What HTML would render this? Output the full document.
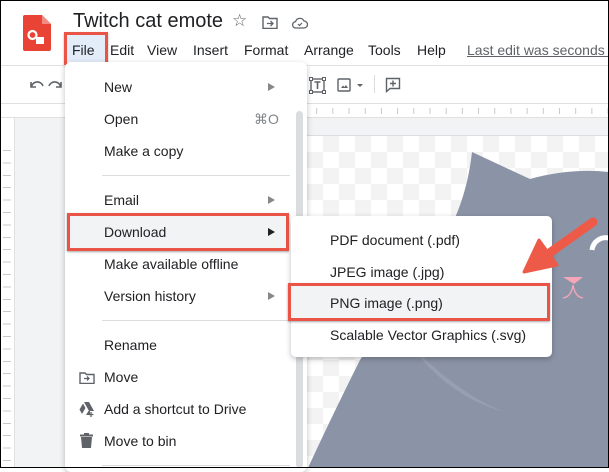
<!DOCTYPE html>
<html><head><style>
*{margin:0;padding:0;box-sizing:border-box}
body{width:609px;height:468px;overflow:hidden;background:#fff;font-family:"Liberation Sans",Arial,sans-serif;color:#202124;position:relative}
.abs{position:absolute}
.mi{position:absolute;left:104px;font-size:14px;color:#202124;line-height:16px}
.arr{position:absolute;left:268px;width:0;height:0;border-top:4px solid transparent;border-bottom:4px solid transparent;border-left:7px solid #888}
.sep{position:absolute;left:102px;width:188px;height:1px;background:#dadce0}
.si{position:absolute;left:330px;font-size:14px;line-height:16px;color:#202124}
</style></head><body>
<svg class="abs" style="left:23px;top:15px" width="28" height="36" viewBox="0 0 28 36">
<path d="M2 0h17l9 9v25a2 2 0 0 1-2 2H2a2 2 0 0 1-2-2V2a2 2 0 0 1 2-2z" fill="#e94335"/>
<path d="M19 0v9h9z" fill="#f28b82"/>
<circle cx="9.5" cy="20" r="4" fill="none" stroke="#fff" stroke-width="2.2"/>
<path d="M13 22h8v7h-8z" fill="#fff"/>
</svg>
<div class="abs" style="left:73px;top:10px;font-size:20px;color:#202124">Twitch cat emote</div>
<div class="abs" style="left:232px;top:11px;font-size:17px;color:#5f6368">☆</div>
<svg class="abs" style="left:262px;top:16px" width="16" height="13" viewBox="0 0 16 13"><path d="M1 1h5l1.5 1.5H15v10H1z" fill="none" stroke="#5f6368" stroke-width="1.4"/><path d="M5 7.5h6M8.5 5l2.5 2.5L8.5 10" fill="none" stroke="#5f6368" stroke-width="1.3"/></svg>
<svg class="abs" style="left:292px;top:17px" width="16" height="12" viewBox="0 0 16 12"><path d="M4 11a3.2 3.2 0 0 1-.4-6.4A4.5 4.5 0 0 1 12 4a3.5 3.5 0 0 1 0 7z" fill="none" stroke="#5f6368" stroke-width="1.3"/><path d="M6 7l1.5 1.5L10 6" fill="none" stroke="#5f6368" stroke-width="1.2"/></svg>
<div class="abs" style="left:64px;top:32px;width:44px;height:34px;border:3px solid #ea5447;background:#e3ecf9;box-shadow:0 1px 2px rgba(0,0,0,.3)"></div>
<div class="abs" style="top:42px;left:72px;font-size:14px;color:#202124">File</div>
<div class="abs" style="top:42px;left:110px;font-size:14px">Edit</div>
<div class="abs" style="top:42px;left:147px;font-size:14px">View</div>
<div class="abs" style="top:42px;left:193px;font-size:14px">Insert</div>
<div class="abs" style="top:42px;left:244px;font-size:14px">Format</div>
<div class="abs" style="top:42px;left:304px;font-size:14px">Arrange</div>
<div class="abs" style="top:42px;left:368px;font-size:14px">Tools</div>
<div class="abs" style="top:42px;left:417px;font-size:14px">Help</div>
<div class="abs" style="top:42px;left:467px;font-size:14px;color:#5f6368;text-decoration:underline;white-space:nowrap">Last edit was seconds ago</div>
<div class="abs" style="left:0;top:65px;width:609px;height:1px;background:#e0e0e0"></div>
<svg class="abs" style="left:28px;top:79px" width="36" height="12" viewBox="0 0 36 12"><path d="M3 3v5h5M3.5 7.5A6 6 0 0 1 15 7" fill="none" stroke="#5f6368" stroke-width="1.6"/><path d="M33 3v5h-5M32.5 7.5A6 6 0 0 0 21 7" fill="none" stroke="#5f6368" stroke-width="1.6"/></svg>
<svg class="abs" style="left:309px;top:77px" width="17" height="17" viewBox="0 0 17 17"><rect x="2" y="2" width="13" height="13" fill="none" stroke="#5f6368" stroke-width="1.4"/><rect x="0.5" y="0.5" width="3" height="3" fill="#fff" stroke="#5f6368"/><rect x="13.5" y="0.5" width="3" height="3" fill="#fff" stroke="#5f6368"/><rect x="0.5" y="13.5" width="3" height="3" fill="#fff" stroke="#5f6368"/><rect x="13.5" y="13.5" width="3" height="3" fill="#fff" stroke="#5f6368"/><path d="M5.5 5h6M8.5 5v7" stroke="#5f6368" stroke-width="1.6"/></svg>
<svg class="abs" style="left:337px;top:78px" width="30" height="14" viewBox="0 0 30 14"><rect x="1" y="1" width="12" height="12" rx="1" fill="none" stroke="#5f6368" stroke-width="1.4"/><path d="M4 10l2-2.5 1.5 1.5 1.5-2 2 3z" fill="#5f6368"/><path d="M20 6h6l-3 3z" fill="#5f6368"/></svg>
<div class="abs" style="left:374px;top:75px;width:1px;height:18px;background:#dadce0"></div>
<svg class="abs" style="left:385px;top:77px" width="16" height="16" viewBox="0 0 16 16"><path d="M1.5 1.5h13v10H5l-3.5 3z" fill="none" stroke="#5f6368" stroke-width="1.4"/><path d="M8 3.5v6M5 6.5h6" stroke="#5f6368" stroke-width="1.4"/></svg>
<div class="abs" style="left:0;top:103px;width:609px;height:1px;background:#e0e0e0"></div>
<div class="abs" style="left:300px;top:108px;width:309px;height:6px;background-image:linear-gradient(90deg,#c8c8c8 0 1px,transparent 1px);background-size:16.2px 6px;background-repeat:repeat-x"></div>
<div class="abs" style="left:0;top:117px;width:609px;height:1px;background:#e0e0e0"></div>
<div class="abs" style="left:0;top:118px;width:609px;height:18px;background:#f1f3f4"></div>
<div class="abs" style="left:0;top:135px;width:609px;height:1px;background:#dadce0"></div>
<div class="abs" style="left:0;top:118px;width:14px;height:350px;background:#fff"></div>
<div class="abs" style="left:14px;top:118px;width:1px;height:350px;background:#e0e0e0"></div>
<div class="abs" style="left:15px;top:118px;width:50px;height:350px;background:#f1f3f4"></div>
<div class="abs" style="left:3px;top:150px;width:8px;height:318px;background:repeating-linear-gradient(180deg,#c8c8c8 0 1px,transparent 1px 12.4px)"></div>
<div class="abs" style="left:307px;top:136px;width:302px;height:332px;background-color:#fff;background-image:linear-gradient(45deg,#f3f3f3 25%,transparent 25%,transparent 75%,#f3f3f3 75%),linear-gradient(45deg,#f3f3f3 25%,transparent 25%,transparent 75%,#f3f3f3 75%);background-size:32px 32px;background-position:0 0,16px 16px"></div>
<svg class="abs" style="left:0;top:0" width="609" height="468" viewBox="0 0 609 468">
<path d="M472 152 L530 179 Q570 168 609 172 L609 468 L308 468 Q330 420 360 360 Q400 300 430 260 Q465 215 472 152z" fill="#8b94a6"/>
<path d="M410 345 Q460 395 505 412 Q450 398 410 345z" fill="#979fb0"/>
<path d="M592 250a14 14 0 0 1 17-12" fill="none" stroke="#fff" stroke-width="5"/>
<path d="M563 277h20l-9 7z" fill="#f6a6b8"/>
<path d="M563 298q8-1 10-13q2 12 10 13" fill="none" stroke="#f6a6b8" stroke-width="1.3"/>
</svg>
<div class="abs" style="left:65px;top:62px;width:242px;height:410px;background:#fff;border-radius:6px;box-shadow:0 2px 6px rgba(0,0,0,.25)"></div>
<div class="abs" style="left:296px;top:111px;width:7px;height:357px;background:#dadce0;border-radius:4px"></div>
<div class="mi" style="top:79px">New</div><div class="arr" style="top:83px"></div>
<div class="mi" style="top:111px">Open</div><div class="abs" style="left:254px;top:111px;font-size:14px;color:#80868b">⌘O</div>
<div class="mi" style="top:143px">Make a copy</div>
<div class="sep" style="top:175px"></div>
<div class="mi" style="top:192px">Email</div><div class="arr" style="top:196px"></div>
<div class="abs" style="left:67px;top:213px;width:222px;height:38px;border:3px solid #ea5447;background:#f1f3f4;box-shadow:0 1px 2px rgba(0,0,0,.35)"></div>
<div class="mi" style="top:224px">Download</div><div class="arr" style="top:228px;border-left-color:#202124"></div>
<div class="mi" style="top:256px">Make available offline</div>
<div class="mi" style="top:288px">Version history</div><div class="arr" style="top:292px"></div>
<div class="sep" style="top:320px"></div>
<div class="mi" style="top:337px">Rename</div>
<svg class="abs" style="left:79px;top:372px" width="16" height="12" viewBox="0 0 16 12"><path d="M1 1h5l1.5 1.5H15v9H1z" fill="none" stroke="#5f6368" stroke-width="1.4"/><path d="M5 6.5h5M8 4.5l2 2-2 2" fill="none" stroke="#5f6368" stroke-width="1.3"/></svg>
<div class="mi" style="top:369px">Move</div>
<svg class="abs" style="left:79px;top:402px" width="16" height="15" viewBox="0 0 16 15"><path d="M5 0h5l5 9h-5zM4 1.5l2.5 4.5L3 12 0.5 7.5zM7 13l2.5-4H11v4z" fill="#5f6368"/><path d="M12 10v5M9.5 12.5h5" stroke="#5f6368" stroke-width="1.3"/></svg>
<div class="mi" style="top:401px">Add a shortcut to Drive</div>
<svg class="abs" style="left:80px;top:433px" width="13" height="15" viewBox="0 0 13 15"><path d="M0 1.5h13v2H0zM4 0h5v2H4zM1 4h11l-1 11H2z" fill="#5f6368"/></svg>
<div class="mi" style="top:433px">Move to bin</div>
<div class="sep" style="top:465px"></div>
<div class="abs" style="left:291px;top:216px;width:261px;height:141px;background:#fff;border-radius:5px;box-shadow:0 2px 6px rgba(0,0,0,.25)"></div>
<div class="si" style="top:232px">PDF document (.pdf)</div>
<div class="si" style="top:264px">JPEG image (.jpg)</div>
<div class="abs" style="left:288px;top:283px;width:262px;height:38px;border:3px solid #ea5447;background:#f1f3f4;box-shadow:0 1px 2px rgba(0,0,0,.35)"></div>
<div class="si" style="top:295px">PNG image (.png)</div>
<div class="si" style="top:327px">Scalable Vector Graphics (.svg)</div>
<svg class="abs" style="left:0;top:0" width="609" height="468" viewBox="0 0 609 468">
<path d="M593 222 L548 254" stroke="#ee5a48" stroke-width="9" stroke-linecap="round"/>
<path d="M524 272 L539 240 L557 265z" fill="#ee5a48" stroke="#ee5a48" stroke-width="3" stroke-linejoin="round"/>
</svg>
<div class="abs" style="left:0;top:0;width:609px;height:468px;border:1px solid #000;pointer-events:none"></div>
</body></html>
